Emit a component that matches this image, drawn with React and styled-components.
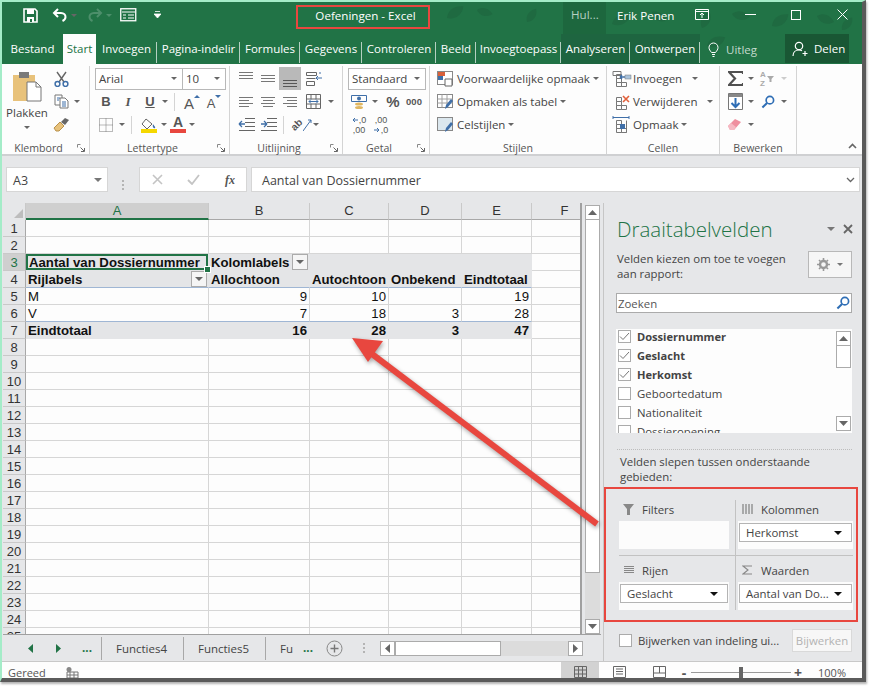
import React from 'react';
import styled, { createGlobalStyle, css } from 'styled-components';

const GlobalStyle = createGlobalStyle`
  html, body { margin: 0; padding: 0; background: #fff; }
  body { font-family: "Open Sans", "Noto Sans", sans-serif; overflow: hidden; }
`;

const green = '#217346';
const panelGrey = '#e6e7e9';
const arial = '"Liberation Sans", Arial, sans-serif';

const Page = styled.div`
  position: relative;
  width: 871px;
  height: 689px;
  background: #fff;
`;

const Frame = styled.div`
  box-sizing: border-box;
  width: 866px;
  height: 682px;
  border-top: 2px solid #a4ecc8;
  border-left: 2px solid #a4ecc8;
  border-right: 4px solid #5a5a5a;
  border-bottom: 4px solid #5a5a5a;
  box-shadow: 1px 2px 2px rgba(0, 0, 0, 0.3);
  display: flex;
  flex-direction: column;
  background: ${panelGrey};
  overflow: hidden;
`;

/* ---- title bar ---- */
const TitleBar = styled.div`
  position: relative;
  height: 32px;
  flex: none;
  background: ${green};
  display: flex;
  align-items: center;
  color: #fff;
  font-size: 11.6px;
  overflow: hidden;
`;

const Leaves = styled.svg`
  position: absolute;
  top: 0;
  left: ${p => p.$left}px;
  pointer-events: none;
`;

const Quick = styled.div`
  display: flex;
  align-items: center;
  flex: none;
  width: 294px;
  padding-left: 18px;
  margin-bottom: 6px;
  box-sizing: border-box;
  position: relative;
`;

const Slot = styled.span`
  display: inline-flex;
  align-items: center;
  justify-content: center;
  width: ${p => p.$w || 20}px;
  margin-left: ${p => p.$ml || 0}px;
  margin-top: ${p => p.$mt || 0}px;
  flex: none;
`;

const AppTitle = styled.div`
  position: relative;
  box-sizing: border-box;
  flex: none;
  width: 134px;
  height: 24px;
  margin-bottom: 3px;
  padding-left: 5px;
  border: 2px solid #e8473f;
  text-align: center;
  line-height: 17px;
  font-size: 11.6px;
`;

const HelpTab = styled.div`
  position: relative;
  flex: none;
  margin-left: 133px;
  width: 43px;
  height: 32px;
  padding-left: 8px;
  box-sizing: border-box;
  line-height: 26px;
  color: #b7d0c2;
  background: rgba(0, 0, 0, 0.1);
`;

const UserName = styled.div`
  position: relative;
  flex: none;
  margin: 0 0 6px 11px;
  width: 70px;
  white-space: nowrap;
`;

const WindowButtons = styled.div`
  position: relative;
  flex: none;
  display: flex;
  align-items: center;
  margin-bottom: 7px;
`;

/* ---- tabs ---- */
const TabBar = styled.div`
  position: relative;
  height: 30px;
  flex: none;
  background: ${green};
  display: flex;
  align-items: flex-end;
  color: #fff;
`;

const Tab = styled.div`
  position: relative;
  box-sizing: border-box;
  width: ${p => p.$w}px;
  flex: none;
  height: 30px;
  line-height: 30px;
  font-size: 11.5px;
  text-align: center;
  white-space: nowrap;
  ${p => p.$sep && css`
    &::after {
      content: '';
      position: absolute;
      right: 0;
      top: 8px;
      height: 21px;
      width: 1px;
      background: #b5d0c1;
    }
  `}
  ${p => p.$active && css`
    background: #fdfdfd;
    color: ${green};
  `}
  ${p => p.$context && css`
    background: #1e6540;
  `}
`;

const TellMe = styled.div`
  position: relative;
  display: flex;
  align-items: center;
  gap: 7px;
  margin-left: 6px;
  width: 79px;
  height: 30px;
  color: #c5dace;
  font-size: 11.5px;
`;

const ShareButton = styled.div`
  position: relative;
  align-self: flex-start;
  display: flex;
  align-items: center;
  gap: 5px;
  width: 64px;
  height: 29px;
  box-sizing: border-box;
  padding-left: 7px;
  background: #195734;
  font-size: 11.5px;
`;

/* ---- ribbon ---- */
const Ribbon = styled.div`
  flex: none;
  height: 90px;
  display: flex;
  background: #fdfdfd;
  border-bottom: 2px solid #cfd0d2;
  color: #444;
`;

const Group = styled.div`
  box-sizing: border-box;
  width: ${p => p.$w}px;
  flex: none;
  height: 88px;
  margin-top: 2px;
  border-right: 1px solid #d4d4d4;
  display: flex;
  flex-direction: column;
`;

const GroupBody = styled.div`
  flex: 1;
  display: flex;
  min-height: 0;
  padding: 1px 0 0 ${p => p.$pl || 0}px;
`;

const Stack = styled.div`
  display: flex;
  flex-direction: column;
  width: ${p => (p.$w ? `${p.$w}px` : 'auto')};
  margin-left: ${p => p.$ml || 0}px;
  padding-top: ${p => p.$pt || 0}px;
`;

const GroupLabel = styled.div`
  position: relative;
  box-sizing: border-box;
  height: 13px;
  line-height: 15px;
  font-size: 10.6px;
  color: #555;
  text-align: center;
  padding-right: ${p => (p.$launcher ? 14 : 0)}px;
`;

const Launcher = styled.svg`
  position: absolute;
  right: 4px;
  top: 3px;
`;

const CollapseSlot = styled.span`
  margin: 0 5px 5px auto;
  align-self: flex-end;
  line-height: 0;
`;

const Row = styled.div`
  display: flex;
  align-items: center;
  height: 23px;
`;

const Divider = styled.span`
  width: 1px;
  height: 18px;
  background: #d4d4d4;
  margin: 0 ${p => p.$m || 5}px;
  flex: none;
`;

const Caret = styled.span`
  display: inline-block;
  flex: none;
  width: 0;
  height: 0;
  border-left: ${p => p.$s || 3}px solid transparent;
  border-right: ${p => p.$s || 3}px solid transparent;
  border-top: ${p => p.$s || 3}px solid ${p => p.$c || '#666'};
  margin-left: ${p => p.$ml || 0}px;
`;

const Combo = styled.div`
  box-sizing: border-box;
  width: ${p => p.$w}px;
  height: 22px;
  border: 1px solid #b8b8b8;
  border-left: ${p => (p.$joined ? 'none' : '1px solid #b8b8b8')};
  background: #fff;
  display: flex;
  align-items: center;
  justify-content: space-between;
  padding: 0 5px 0 3px;
  font-size: 11.5px;
  color: #444;
  flex: none;
`;

const PasteLabel = styled.div`
  font-size: 11.5px;
  margin-top: 3px;
  text-align: center;
  line-height: 14px;
  color: #444;
`;

const ActiveAlign = styled.span`
  display: inline-flex;
  align-items: center;
  justify-content: center;
  width: 22px;
  height: 23px;
  background: #b9b9b9;
  flex: none;
`;

const BoldLetter = styled.span`
  font-family: ${p => (p.$serif ? '"Liberation Serif", serif' : arial)};
  font-weight: 700;
  font-style: ${p => (p.$italic ? 'italic' : 'normal')};
  text-decoration: ${p => (p.$under ? 'underline' : 'none')};
  font-size: 13px;
  color: #555;
  width: 22px;
  text-align: center;
  flex: none;
`;

const GrowSlot = styled.span`
  display: inline-flex;
  align-items: flex-start;
  width: 22px;
  height: 20px;
  flex: none;
  justify-content: center;
  gap: 0;
  font-family: ${arial};
  font-size: ${p => (p.$small ? 13 : 15)}px;
  line-height: ${p => (p.$small ? 24 : 23)}px;
  color: #555;
`;

const TinyTriangle = styled.svg`
  margin-top: 3px;
  flex: none;
`;

const ColorLetter = styled.span`
  display: inline-flex;
  flex-direction: column;
  align-items: center;
  width: 16px;
  font: 700 14px/13px ${arial};
  color: #555;
  flex: none;
  margin-left: 3px;
  &::after {
    content: '';
    width: 16px;
    height: 4px;
    background: #e8473f;
  }
`;

const OrientLetters = styled.span`
  display: inline-block;
  transform: rotate(-45deg);
  font: 700 10px/10px ${arial};
  color: #555;
`;

const OrientSlot = styled.span`
  display: inline-flex;
  align-items: center;
  width: 22px;
  flex: none;
  margin-left: 3px;
`;

const DecimalStack = styled.span`
  display: inline-flex;
  flex-direction: column;
  width: 22px;
  flex: none;
  font: 9px/10px ${arial};
  color: #555;
  align-items: center;
`;

const DecimalLine = styled.span`
  display: flex;
  align-items: center;
  gap: 1px;
  height: 10px;
  white-space: nowrap;
`;

const GlyphSlot = styled.span`
  display: inline-flex;
  justify-content: center;
  flex: none;
  width: ${p => p.$w}px;
  margin-left: ${p => p.$ml || 0}px;
  font-family: ${arial};
  font-weight: 700;
  font-size: ${p => p.$s}px;
  color: #555;
`;

const SortSlot = styled.span`
  display: inline-flex;
  align-items: center;
  gap: 1px;
  width: 16px;
  flex: none;
  margin-left: 6px;
`;

const SortLetters = styled.span`
  display: inline-flex;
  flex-direction: column;
  font: 700 8px/9px ${arial};
  color: #aaa;
`;

const StyleItem = styled.div`
  display: flex;
  align-items: center;
  height: 23px;
  gap: ${p => p.$gap || 3}px;
  font-size: 11.5px;
  color: #444;
  white-space: nowrap;
`;

/* ---- formula bar ---- */
const FormulaBar = styled.div`
  flex: none;
  height: 47px;
  box-sizing: border-box;
  padding: 11px 2px 0 4px;
  display: flex;
  background: ${panelGrey};
`;

const NameBox = styled.div`
  box-sizing: border-box;
  width: 102px;
  height: 25px;
  background: #fff;
  border: 1px solid #d6d6d6;
  display: flex;
  align-items: center;
  justify-content: space-between;
  padding: 1px 5px 0 6px;
  font-size: 12.5px;
  color: #444;
`;

const Grip = styled.span`
  width: 2px;
  height: 2px;
  background: #b4b4b4;
  box-shadow: 0 4px 0 #b4b4b4, 0 8px 0 #b4b4b4;
  margin: 0 ${p => p.$mr || 0}px 8px ${p => p.$ml || 0}px;
  align-self: center;
  flex: none;
`;

const FormulaButtons = styled.div`
  box-sizing: border-box;
  width: 108px;
  height: 25px;
  background: #fff;
  border: 1px solid #d6d6d6;
  display: flex;
  align-items: center;
  padding-left: 6px;
`;

const FxGlyph = styled.span`
  width: 24px;
  flex: none;
  text-align: center;
  font: italic 700 12px/14px "Liberation Serif", serif;
  color: #555;
`;

const FormulaInput = styled.div`
  box-sizing: border-box;
  flex: 1;
  margin-left: 4px;
  height: 25px;
  background: #fff;
  border: 1px solid #d6d6d6;
  display: flex;
  align-items: center;
  justify-content: space-between;
  padding: 1px 4px 0 10px;
  font-size: 12.5px;
  color: #444;
`;

/* ---- work area ---- */
const Work = styled.div`
  flex: 1;
  min-height: 0;
  display: flex;
`;

const SheetColumn = styled.div`
  width: 599px;
  flex: none;
  display: flex;
  flex-direction: column;
  padding-left: 1px;
  box-sizing: border-box;
`;

const SheetArea = styled.div`
  height: 431px;
  flex: none;
  display: flex;
  border-bottom: 1px solid #a0a0a0;
`;

const Grid = styled.div`
  box-sizing: border-box;
  width: 579px;
  flex: none;
  overflow: hidden;
  display: grid;
  grid-template-columns: 23px 183px 101px 79px 73px 70px 66px;
  grid-auto-rows: 17px;
  background: linear-gradient(${panelGrey} 17px, #fdfdfd 17px);
  border-right: 2px solid #a0a0a0;
  align-content: start;
`;

const Corner = styled.div`
  background: ${panelGrey};
  position: relative;
  border-right: 1px solid #c9c9c9;
  &::after {
    content: '';
    position: absolute;
    right: 2px;
    bottom: 2px;
    border-left: 9px solid transparent;
    border-bottom: 9px solid #bdbdbd;
  }
`;

const ColHead = styled.div`
  box-sizing: border-box;
  background: ${p => (p.$active ? '#cfcfcf' : panelGrey)};
  color: ${p => (p.$active ? green : '#333')};
  border-right: 1px solid #c9c9c9;
  border-bottom: ${p => (p.$active ? `2px solid ${green}` : '1px solid #a8a8a8')};
  font: 13px/15px ${arial};
  text-align: center;
`;

const RowHead = styled.div`
  box-sizing: border-box;
  background: ${p => (p.$active ? '#cfcfcf' : panelGrey)};
  color: ${p => (p.$active ? green : '#333')};
  border-right: 1px solid #a8a8a8;
  border-bottom: 1px solid #c9c9c9;
  font: 13px/17px ${arial};
  text-align: center;
`;

const Cell = styled.div`
  position: relative;
  box-sizing: border-box;
  border-right: 1px solid ${p => (p.$fill ? 'transparent' : '#d6d6d6')};
  border-bottom: 1px solid ${p => (p.$line ? '#9fb6d4' : p.$fill ? 'transparent' : '#d6d6d6')};
  background: ${p => (p.$fill ? '#e4e5e7' : 'transparent')};
  font: ${p => (p.$bold ? 700 : 400)} 13.2px/17px ${arial};
  color: #111;
  padding: 0 2px;
  text-align: ${p => (p.$num ? 'right' : 'left')};
  white-space: nowrap;
  ${p => p.$selected && css`
    box-shadow: inset 0 0 0 2px ${green};
    padding-left: 3px;
    &::after {
      content: '';
      position: absolute;
      right: -3px;
      bottom: -3px;
      width: 5px;
      height: 5px;
      background: ${green};
      border: 1px solid #fff;
      z-index: 2;
    }
  `}
`;

const FilterButton = styled.span`
  position: absolute;
  right: 1px;
  top: 0;
  box-sizing: border-box;
  width: 16px;
  height: 16px;
  background: #f5f5f5;
  border: 1px solid #ababab;
  display: flex;
  align-items: center;
  justify-content: center;
`;

const VScroll = styled.div`
  box-sizing: border-box;
  width: 19px;
  flex: none;
  padding: 2px 1px 0 3px;
  display: flex;
  flex-direction: column;
`;

const ScrollThumb = styled.div`
  box-sizing: border-box;
  flex: none;
  background: #fff;
  border: 1px solid #ababab;
  border-top: none;
  width: 15px;
  height: ${p => p.$h}px;
`;

const VTrack = styled.div`
  flex: 1;
  background: ${p => (p.$dark ? '#dcdcdc' : 'transparent')};
`;

const ArrowBtn = styled.div`
  box-sizing: border-box;
  width: 15px;
  height: ${p => p.$h || 15}px;
  flex: none;
  background: #fff;
  border: 1px solid #ababab;
  display: flex;
  align-items: center;
  justify-content: center;
`;

const SheetTabs = styled.div`
  flex: none;
  height: 26px;
  display: flex;
  align-items: center;
  background: ${panelGrey};
  font-size: 11.5px;
  color: #444;
`;

const NavDots = styled.span`
  color: ${green};
  font-weight: 700;
  width: 16px;
  margin-left: ${p => p.$ml || 0}px;
  text-align: center;
  line-height: 10px;
  flex: none;
`;

const SheetTab = styled.div`
  box-sizing: border-box;
  height: 23px;
  width: ${p => p.$w}px;
  flex: none;
  line-height: 23px;
  padding: 0 ${p => (p.$pl ? 0 : 2)}px 0 ${p => p.$pl || 0}px;
  text-align: ${p => (p.$pl ? 'left' : 'center')};
  border-right: ${p => (p.$noSep ? 'none' : '1px solid #a8a8a8')};
`;

const TabSep = styled.span`
  width: 1px;
  height: 23px;
  background: #a8a8a8;
  flex: none;
  margin-left: ${p => p.$ml}px;
`;

const HScroll = styled.div`
  display: flex;
  align-items: center;
  margin-left: 15px;
  width: 203px;
  flex: none;
`;

const HThumb = styled.div`
  box-sizing: border-box;
  width: 106px;
  height: 15px;
  background: #fff;
  border: 1px solid #ababab;
  flex: none;
`;

const HTrack = styled.div`
  flex: 1;
  height: 15px;
  background: #dcdcdc;
`;

/* ---- field pane ---- */
const Pane = styled.div`
  flex: 1;
  min-width: 0;
  box-sizing: border-box;
  margin-left: 2px;
  padding: 14px 10px 0 13px;
  border-left: 1px solid #c6c6c6;
  background: ${panelGrey};
  color: #444;
  font-size: 11.4px;
  line-height: 15px;
  display: flex;
  flex-direction: column;
`;

const PaneHead = styled.div`
  display: flex;
  align-items: center;
  justify-content: space-between;
  height: 24px;
  margin-right: -1px;
`;

const PaneTitle = styled.div`
  font-size: 20.5px;
  font-weight: 300;
  color: ${green};
  line-height: 24px;
`;

const PaneTools = styled.div`
  display: flex;
  align-items: center;
  gap: 8px;
`;

const PaneIntro = styled.div`
  display: flex;
  justify-content: space-between;
  margin-top: 10px;
  height: 32px;
`;

const GearButton = styled.div`
  box-sizing: border-box;
  width: 44px;
  height: 27px;
  background: #f6f6f6;
  border: 1px solid #b8b8b8;
  display: flex;
  align-items: center;
  justify-content: center;
  gap: 7px;
`;

const SearchBox = styled.div`
  box-sizing: border-box;
  height: 20px;
  margin: 10px 0 0 -1px;
  background: #fff;
  border: 1px solid #ababab;
  display: flex;
  align-items: center;
  justify-content: space-between;
  padding: 0 1px;
  color: #555;
`;

const FieldList = styled.div`
  margin: 16px 0 0 -1px;
  height: 104px;
  flex: none;
  background: #fdfdfd;
  overflow: hidden;
  display: flex;
`;

const Fields = styled.div`
  flex: 1;
  margin-top: -2px;
  padding-left: 2px;
`;

const FieldRow = styled.div`
  display: flex;
  align-items: center;
  height: 19px;
  gap: 6px;
  font-weight: ${p => (p.$on ? 700 : 400)};
  font-size: ${p => (p.$on ? 11.1 : 11.4)}px;
  color: #444;
  white-space: nowrap;
`;

const CheckBox = styled.span`
  box-sizing: border-box;
  width: 13px;
  height: 13px;
  background: #fff;
  border: 1px solid #ababab;
  flex: none;
  display: inline-flex;
  align-items: center;
  justify-content: center;
`;

const ListScroll = styled.div`
  width: 15px;
  flex: none;
  margin-right: 1px;
  display: flex;
  flex-direction: column;
  padding-top: 2px;
  height: 102px;
  box-sizing: border-box;
`;

const DottedRule = styled.div`
  border-top: 1px dotted #bcbcbc;
  margin-top: 16px;
`;

const DragHint = styled.div`
  margin-top: 4px;
  padding-left: 3px;
  height: 30px;
  flex: none;
`;

const AreaBox = styled.div`
  box-sizing: border-box;
  flex: none;
  margin: 3px -6px 0 -13px;
  height: 135px;
  border: 2px solid #e8473f;
  padding: 11px 0 0 13px;
  display: grid;
  grid-template-columns: 117px 117px;
  grid-template-rows: 56px 54px;
`;

const Area = styled.div`
  box-sizing: border-box;
  display: flex;
  flex-direction: column;
  border-right: ${p => (p.$right ? 'none' : '1px solid #c2c2c2')};
  border-bottom: ${p => (p.$bottom ? 'none' : '1px solid #c2c2c2')};
  padding-right: ${p => (p.$right ? 0 : 6)}px;
  padding-left: ${p => (p.$right ? 2 : 0)}px;
  padding-top: ${p => (p.$bottom ? 5 : 0)}px;
`;

const AreaHead = styled.div`
  box-sizing: border-box;
  display: flex;
  align-items: center;
  gap: 7px;
  height: 21px;
  flex: none;
  padding: 0 0 3px 4px;
`;

const DropZone = styled.div`
  box-sizing: border-box;
  height: 28px;
  flex: none;
  background: #fcfcfc;
  padding: 2px 1px 0;
`;

const FieldPill = styled.div`
  box-sizing: border-box;
  height: 19px;
  background: #fff;
  border: 1px solid #b4b4b4;
  display: flex;
  align-items: center;
  justify-content: space-between;
  padding: 0 9px 0 6px;
  white-space: nowrap;
  overflow: hidden;
`;

const UpdateRow = styled.div`
  display: flex;
  align-items: center;
  justify-content: space-between;
  height: 23px;
  margin-top: 7px;
  padding-left: 2px;
`;

const UpdateLabel = styled.div`
  display: flex;
  align-items: center;
  gap: 6px;
  white-space: nowrap;
`;

const UpdateButton = styled.div`
  box-sizing: border-box;
  width: 60px;
  height: 23px;
  background: #f7f7f7;
  border: 1px solid #d9d9d9;
  color: #b3b3b3;
  text-align: center;
  line-height: 21px;
`;

/* ---- status bar ---- */
const StatusBar = styled.div`
  flex: none;
  height: 17px;
  box-sizing: border-box;
  display: flex;
  align-items: stretch;
  background: #fdfdfd;
  border-top: 1px solid #c8c8c8;
  font-size: 11px;
  color: #555;
  line-height: 11px;
  overflow: hidden;
`;

const StatusLeft = styled.div`
  display: flex;
  align-items: center;
  padding-top: 5px;
`;

const StatusText = styled.span`
  margin-left: 6px;
  width: 58px;
`;

const ViewGroup = styled.div`
  margin-left: auto;
  display: flex;
  align-items: center;
  padding: 4px 16px 0 0;
`;

const NormalView = styled.span`
  display: inline-flex;
  align-items: center;
  justify-content: center;
  box-sizing: border-box;
  width: 38px;
  align-self: stretch;
  margin-top: -4px;
  padding-top: 4px;
  background: #d2d2d2;
`;

const ZoomTrack = styled.span`
  position: relative;
  display: inline-block;
  width: 100px;
  height: 1px;
  background: #9a9a9a;
  margin: 0 2px;
  &::after {
    content: '';
    position: absolute;
    left: 48px;
    top: -5px;
    width: 4px;
    height: 11px;
    background: #666;
  }
`;

const ZoomSign = styled.span`
  font-weight: 700;
  font-size: 14px;
  line-height: 11px;
  color: #555;
  width: 10px;
  text-align: center;
`;

const ZoomValue = styled.span`
  margin-left: 15px;
`;

const Annotation = styled.svg`
  position: absolute;
  left: 0;
  top: 0;
  pointer-events: none;
  filter: drop-shadow(1px 2px 2px rgba(0, 0, 0, 0.35));
`;

/* ---- drawings ---- */
const Svg = ({ w = 16, h = 16, children, ...rest }) => (
  <svg width={w} height={h} viewBox={`0 0 ${w} ${h}`} fill="none" {...rest}>{children}</svg>
);

const Lines = ({ ys, xs, color = '#777', w = 16, h = 14 }) => (
  <Svg w={w} h={h}>
    {ys.map((y, i) => (
      <rect key={y} x={xs[i][0]} y={y} width={xs[i][1]} height="1" fill={color} />
    ))}
  </Svg>
);

const SaveIcon = () => (
  <Svg w={15} h={15}>
    <path d="M1 1h11l2 2v11H1z" stroke="#fff" strokeWidth="1.6" />
    <rect x="4" y="1" width="7" height="5" fill="#fff" />
    <rect x="4" y="9" width="7" height="5" fill="#fff" />
    <rect x="7" y="11" width="2" height="3" fill={green} />
  </Svg>
);

const UndoIcon = ({ color = '#fff', flip }) => (
  <Svg w={16} h={14} style={flip ? { transform: 'scaleX(-1)' } : undefined}>
    <path d="M6 1L2 5l4 4M2 5h7c3 0 4.5 2 4.5 4s-1 3-3 4" stroke={color} strokeWidth="2" />
  </Svg>
);

const FormIcon = () => (
  <Svg w={17} h={14}>
    <rect x=".75" y=".75" width="15" height="12" stroke="#fff" strokeWidth="1.3" />
    <path d="M2 4h13M8 7h6M8 10h6M3 7h3M3 10h3" stroke="#fff" />
  </Svg>
);

const ClipboardIcon = () => (
  <Svg w={30} h={32}>
    <path d="M1 4h22v26H1z" fill="#e8c27b" />
    <rect x="7" y="1" width="10" height="6" fill="#7a7a7a" />
    <path d="M15 11h9l5 5v14H15z" fill="#fff" stroke="#777" />
    <path d="M24 11v5h5" stroke="#777" />
  </Svg>
);

const CutIcon = () => (
  <Svg w={15} h={16}>
    <path d="M3 1l7 10M12 1L5 11" stroke="#666" strokeWidth="1.4" />
    <circle cx="3.5" cy="13" r="2.4" stroke="#3f6fa8" strokeWidth="1.5" />
    <circle cx="11.5" cy="13" r="2.4" stroke="#3f6fa8" strokeWidth="1.5" />
  </Svg>
);

const CopyIcon = () => (
  <Svg w={15} h={15}>
    <path d="M1 1h7v10H1z" fill="#fff" stroke="#777" />
    <path d="M6 4h5l3 3v7H6z" fill="#fff" stroke="#777" />
    <path d="M3 4h3M3 6h2M8 8h4M8 10h4M8 12h4" stroke="#3f6fa8" />
  </Svg>
);

const PainterIcon = () => (
  <Svg w={17} h={15}>
    <path d="M1 11l6-6 4 4-5 5H3z" fill="#e8c27b" stroke="#b8914c" />
    <path d="M8 5l4-4 4 2-4 5z" fill="#666" />
  </Svg>
);

const GrowFont = ({ down }) => (
  <GrowSlot $small={down}>
    A
    <TinyTriangle width="6" height="4">
      <path d={down ? 'M0 0h6L3 3z' : 'M3 0l3 3H0z'} fill="#3f6fa8" />
    </TinyTriangle>
  </GrowSlot>
);

const BorderIcon = () => (
  <Svg w={14} h={14}>
    <path d="M.5.5h13v13H.5zM7 .5v13M.5 7h13" stroke="#777" strokeDasharray="1 1" />
  </Svg>
);

const FillIcon = () => (
  <Svg w={17} h={16}>
    <path d="M5 2l6 5-5 5-5-5z" fill="#fff" stroke="#666" />
    <path d="M12 7c1 2 3 3 2 4s-3-1-2-4z" fill="#3f6fa8" />
    <rect x="0" y="12" width="16" height="4" fill="#f5d800" />
  </Svg>
);

const WrapIcon = () => (
  <Svg w={18} h={16}>
    <path d="M1.5 1.5h10v3h-10zM1.5 7.5h9M1.5 10.5h8v4h-8z" stroke="#666" />
    <path d="M14 2h2M17 7h-6l2-2m-2 2l2 2" stroke="#3f6fa8" />
  </Svg>
);

const MergeIcon = () => (
  <Svg w={16} h={16}>
    <path d="M.5.5h14v14H.5zM.5 5h14M.5 10h14M5 .5V5M10 .5V5M5 10v5M10 10v5" stroke="#666" />
    <path d="M3 7.5h9M3 7.5l2-2M3 7.5l2 2M12 7.5l-2-2M12 7.5l-2 2" stroke="#3f6fa8" />
  </Svg>
);

const IndentIcon = ({ out }) => (
  <Svg w={17} h={13}>
    <path d="M7 .5h10M7 4.5h10M7 8.5h10M1 12.5h16" stroke="#666" />
    {out
      ? <path d="M1 6h6M1 6l3-3M1 6l3 3" stroke="#3f6fa8" strokeWidth="1.3" />
      : <path d="M1 6h6M7 6L4 3M7 6L4 9" stroke="#3f6fa8" strokeWidth="1.3" />}
  </Svg>
);

const OrientIcon = () => (
  <OrientSlot>
    <OrientLetters>ab</OrientLetters>
    <Svg w={9} h={14}>
      <path d="M0 13L8 2M8 2H5M8 2v3" stroke="#3f6fa8" />
    </Svg>
  </OrientSlot>
);

const CurrencyIcon = () => (
  <Svg w={17} h={16}>
    <path d="M.5 1.5h15v6H.5z" stroke="#3f6fa8" />
    <circle cx="8" cy="4.5" r="2" fill="#3f6fa8" />
    <ellipse cx="8" cy="10" rx="4" ry="1.6" fill="#e0b660" />
    <ellipse cx="8" cy="13.5" rx="4" ry="1.6" fill="#e0b660" />
  </Svg>
);

const DecArrow = ({ left }) => (
  <Svg w={6} h={6}>
    <path d={left ? 'M6 3H1M1 3l2-2M1 3l2 2' : 'M0 3h5M5 3L3 1M5 3L3 5'} stroke="#3f6fa8" />
  </Svg>
);

const StyleIcon = ({ kind }) => (
  <Svg w={17} h={16}>
    <rect x=".5" y=".5" width="15" height="13" fill={kind === 'cell' ? '#dbe7ee' : '#fff'} stroke="#888" />
    {kind === 'cond' && <rect x="1" y="1" width="7" height="4" fill="#d8603a" />}
    {kind === 'cond' && <rect x="1" y="5" width="5" height="4" fill="#3f6fa8" />}
    {kind === 'cond' && <path d="M8 8h7v7H8z" fill="#fff" stroke="#666" />}
    {kind === 'table' && <path d="M.5 5h15M.5 9h15M5 .5v13M10 .5v13" stroke="#a0a0a0" />}
    {kind !== 'cond' && <path d="M8 15l1-4 5-6 2 2-5 6z" fill="#3f6fa8" />}
  </Svg>
);

const CellsIcon = ({ kind }) => (
  <Svg w={20} h={18}>
    <path d="M4.5 4.5h5v4h-5zM4.5 8.500h5v4h-5zM4.5 12.500h5v4h-5zM9.500 12.500h5v4h-5z" stroke="#777" />
    {kind === 'ins' && <path d="M1 1.500h8v4H1z" stroke="#777" />}
    {kind === 'ins' && <path d="M8 7h5M8 7l2-2M8 7l2 2" stroke="#3f6fa8" strokeWidth="1.400" />}
    {kind === 'ins' && <rect x="13" y="5" width="6" height="4" fill="#a9c3dc" stroke="#777" strokeWidth=".5" />}
    {kind === 'del' && <path d="M11 3l6 6M17 3l-6 6" stroke="#e2603a" strokeWidth="1.600" />}
    {kind === 'fmt' && <rect x="8" y="8" width="5" height="5" fill="#3f6fa8" />}
    {kind === 'fmt' && <path d="M1 1.500h16M1 0v3M17 0v3" stroke="#3f6fa8" />}
    {kind === 'fmt' && <path d="M14.500 4.500v12" stroke="#777" />}
  </Svg>
);

const SumIcon = () => (
  <Svg w={15} h={15}>
    <path d="M15 3V1H1l6 6.500L1 14h14v-2" stroke="#505050" strokeWidth="2.200" />
  </Svg>
);

const FillDown = () => (
  <Svg w={15} h={17}>
    <path d="M.5.5h14v16H.5z" fill="#fff" stroke="#777" />
    <rect x="1" y="1" width="13" height="3" fill="#888" />
    <path d="M7.500 5v9M3.500 10l4 4 4-4" stroke="#2f6eb5" strokeWidth="2" />
  </Svg>
);

const SearchIcon = ({ s = 15 }) => (
  <svg width={s} height={s} viewBox="0 0 15 15" fill="none">
    <circle cx="9.500" cy="5.500" r="4" stroke="#2f6eb5" strokeWidth="1.800" />
    <path d="M6.500 8.500L1.500 13.500" stroke="#2f6eb5" strokeWidth="2.200" />
  </svg>
);

const Eraser = () => (
  <Svg w={14} h={13}>
    <path d="M0 8l7-7 6 3-7 8H2z" fill="#ef8f9f" />
    <path d="M0 8l3-3 5 4-2 3H2z" fill="#f6b9c3" />
  </Svg>
);

const Tick = ({ color = '#777' }) => (
  <Svg w={11} h={9}>
    <path d="M1 4.500l3 3 6-6.500" stroke={color} />
  </Svg>
);

const TriUp = () => <svg width="9" height="5"><path d="M0 5l4.500-5 4.500 5z" fill="#666" /></svg>;
const TriDown = () => <svg width="9" height="5"><path d="M0 0l4.500 5 4.500-5z" fill="#666" /></svg>;
const TriLeft = ({ c = '#666' }) => <svg width="5" height="9"><path d="M5 0L0 4.500 5 9z" fill={c} /></svg>;
const TriRight = ({ c = '#666' }) => <svg width="5" height="9"><path d="M0 0l5 4.500L0 9z" fill={c} /></svg>;

const LauncherIcon = () => (
  <Launcher width="8" height="8">
    <path d="M.5.500h3M.5.500v3" stroke="#888" />
    <path d="M7.500 7.500H4M7.500 7.500V4M7 7L3.500 3.500" stroke="#666" />
  </Launcher>
);

const Leaf = ({ x, y, r = 0, s = 1 }) => (
  <path
    transform={`translate(${x} ${y}) rotate(${r}) scale(${s})`}
    d="M0 0c5-7 13-7 20-2-5 7-14 8-20 2z"
  />
);

/* ---- data ---- */
const tabs = [
  ['Bestand', 61, false], ['Start', 33, false, 'active'], ['Invoegen', 61, true],
  ['Pagina-indelir', 83, true], ['Formules', 60, true], ['Gegevens', 62, true],
  ['Controleren', 74, true], ['Beeld', 40, true], ['Invoegtoepass', 85, true],
  ['Analyseren', 69, true, 'context'], ['Ontwerpen', 70, true, 'context'],
];

const B = { bold: true };
const rows = {
  3: [{ t: 'Aantal van Dossiernummer', selected: true, fill: true, ...B }, { t: 'Kolomlabels', filter: true, fill: true, ...B }, { fill: true }, { fill: true }, { fill: true }],
  4: [{ t: 'Rijlabels', filter: true, fill: true, line: true, ...B }, { t: 'Allochtoon', fill: true, line: true, ...B }, { t: 'Autochtoon', fill: true, line: true, ...B }, { t: 'Onbekend', fill: true, line: true, ...B }, { t: 'Eindtotaal', fill: true, line: true, ...B }],
  5: [{ t: 'M' }, { t: '9', num: true }, { t: '10', num: true }, {}, { t: '19', num: true }],
  6: [{ t: 'V', line: true }, { t: '7', num: true, line: true }, { t: '18', num: true, line: true }, { t: '3', num: true, line: true }, { t: '28', num: true, line: true }],
  7: [{ t: 'Eindtotaal', fill: true, ...B }, { t: '16', num: true, fill: true, ...B }, { t: '28', num: true, fill: true, ...B }, { t: '3', num: true, fill: true, ...B }, { t: '47', num: true, fill: true, ...B }],
};

const rowNumbers = Array.from({ length: 25 }, (_, i) => i + 1);
const fieldList = [
  ['Dossiernummer', true], ['Geslacht', true], ['Herkomst', true],
  ['Geboortedatum', false], ['Nationaliteit', false], ['Dossieropening', false],
];

const Pill = ({ label }) => (
  <FieldPill>{label}<Caret $s={4} $c="#111" /></FieldPill>
);

function Sheet() {
  return (
    <Grid>
      <Corner />
      {['A', 'B', 'C', 'D', 'E', 'F'].map(c => <ColHead key={c} $active={c === 'A'}>{c}</ColHead>)}
      {rowNumbers.map(n => (
        <React.Fragment key={n}>
          <RowHead $active={n === 3}>{n}</RowHead>
          {[0, 1, 2, 3, 4, 5].map((c) => {
            const cell = (rows[n] && rows[n][c]) || {};
            return (
              <Cell
                key={c}
                $fill={cell.fill}
                $bold={cell.bold}
                $num={cell.num}
                $line={cell.line}
                $selected={cell.selected}
              >
                {cell.t}
                {cell.filter && <FilterButton><Caret $s={4} /></FilterButton>}
              </Cell>
            );
          })}
        </React.Fragment>
      ))}
    </Grid>
  );
}

export default function App() {
  return (
    <Page>
      <GlobalStyle />
      <Frame>
        <TitleBar>
          <Leaves $left={445} width="420" height="32" viewBox="0 0 420 32" fill="#1f6a41">
            <Leaf x={0} y={16} r={-30} />
            <Leaf x={30} y={8} r={20} s={0.8} />
            <Leaf x={80} y={20} r={-50} s={0.8} />
            <Leaf x={165} y={22} r={-20} />
            <Leaf x={205} y={10} r={40} s={0.8} />
            <Leaf x={255} y={26} r={-60} s={0.9} />
            <Leaf x={285} y={12} r={15} s={0.9} />
            <Leaf x={325} y={24} r={-30} />
            <Leaf x={370} y={14} r={25} s={0.9} />
            <Leaf x={395} y={28} r={-45} s={0.8} />
          </Leaves>
          <Quick>
            <Slot $w={20}><SaveIcon /></Slot>
            <Slot $w={20} $ml={10}><UndoIcon /></Slot>
            <Slot $w={8}><Caret /></Slot>
            <Slot $w={20} $ml={7}><UndoIcon color="#4d8f6b" flip /></Slot>
            <Slot $w={8}><Caret $c="#4d8f6b" /></Slot>
            <Slot $w={20} $ml={5}><FormIcon /></Slot>
            <Slot $w={16} $ml={11}>
              <Svg w={7} h={8}><path d="M1 .500h5M0 3h7L3.500 7z" stroke="#fff" strokeWidth=".8" fill="#fff" /></Svg>
            </Slot>
          </Quick>
          <AppTitle>Oefeningen - Excel</AppTitle>
          <HelpTab>Hul...</HelpTab>
          <UserName>Erik Penen</UserName>
          <WindowButtons>
            <Slot $w={30}>
              <Svg w={14} h={11}><path d="M.5.500h13v10H.5zM.5 2.500h13M7 9V4M5 6l2-2 2 2" stroke="#fff" /></Svg>
            </Slot>
            <Slot $w={46} $ml={10}>
              <Svg w={11} h={2}><rect width="11" height="1" fill="#fff" /></Svg>
            </Slot>
            <Slot $w={46}>
              <Svg w={10} h={10}><rect x=".5" y=".5" width="9" height="9" stroke="#fff" /></Svg>
            </Slot>
            <Slot $w={46}>
              <Svg w={11} h={11}><path d="M.5.500l10 10M10.500.500l-10 10" stroke="#fff" /></Svg>
            </Slot>
          </WindowButtons>
        </TitleBar>

        <TabBar>
          <Leaves $left={700} width="160" height="30" viewBox="0 0 160 30" fill="#1f6a41">
            <Leaf x={5} y={12} r={-20} />
            <Leaf x={110} y={6} r={20} s={0.8} />
          </Leaves>
          {tabs.map(([label, w, sep, kind]) => (
            <Tab key={label} $w={w} $sep={sep} $active={kind === 'active'} $context={kind === 'context'}>{label}</Tab>
          ))}
          <TellMe>
            <Svg w={11} h={15} style={{ marginLeft: 2 }}>
              <path d="M3.500 10.500C2 8.500 1 7.500 1 5.500a4.500 4.500 0 019 0c0 2-1 3-2.500 5zM4 12.500h3M4.500 14.500h2" stroke="#fff" />
            </Svg>
            Uitleg
          </TellMe>
          <ShareButton>
            <Svg w={17} h={16}>
              <circle cx="7" cy="5" r="3.700" stroke="#fff" strokeWidth="1.200" />
              <path d="M1 15c0-4 3-6 6-6 1 0 2 .3 3 .8M13 10v5M10.500 12.500h5" stroke="#fff" strokeWidth="1.200" />
            </Svg>
            Delen
          </ShareButton>
        </TabBar>

        <Ribbon>
          <Group $w={88}>
            <GroupBody $pl={3}>
              <Stack $w={44} $pt={4}>
                <Slot $w={44}><ClipboardIcon /></Slot>
                <PasteLabel>Plakken</PasteLabel>
                <Slot $w={44} $mt={6}><Caret /></Slot>
              </Stack>
              <Stack $ml={2}>
                <Row><Slot $w={20}><CutIcon /></Slot></Row>
                <Row><Slot $w={20}><CopyIcon /></Slot><Caret $ml={3} /></Row>
                <Row><Slot $w={20}><PainterIcon /></Slot></Row>
              </Stack>
            </GroupBody>
            <GroupLabel $launcher>Klembord<LauncherIcon /></GroupLabel>
          </Group>

          <Group $w={140}>
            <GroupBody $pl={5}>
              <Stack>
                <Row>
                  <Combo $w={88}>Arial<Caret /></Combo>
                  <Combo $w={43} $joined>10<Caret /></Combo>
                </Row>
                <Row>
                  <BoldLetter>B</BoldLetter>
                  <BoldLetter $italic $serif>I</BoldLetter>
                  <BoldLetter $under>U</BoldLetter>
                  <Caret $ml={1} />
                  <Divider $m={6} />
                  <GrowFont />
                  <GrowFont down />
                </Row>
                <Row>
                  <Slot $w={22}><BorderIcon /></Slot>
                  <Caret $ml={2} />
                  <Divider $m={6} />
                  <Slot $w={22}><FillIcon /></Slot>
                  <Caret $ml={1} />
                  <ColorLetter>A</ColorLetter>
                  <Caret $ml={3} />
                </Row>
              </Stack>
            </GroupBody>
            <GroupLabel $launcher>Lettertype<LauncherIcon /></GroupLabel>
          </Group>

          <Group $w={113}>
            <GroupBody $pl={5}>
              <Stack>
                <Row>
                  <Slot $w={22}><Lines h={16} ys={[1, 4, 7]} xs={[[1, 14], [1, 14], [1, 14]]} /></Slot>
                  <Slot $w={22}><Lines h={16} ys={[4, 7, 10]} xs={[[1, 14], [1, 14], [1, 14]]} /></Slot>
                  <ActiveAlign><Lines h={16} ys={[9, 12, 15]} xs={[[1, 14], [1, 14], [1, 14]]} color="#555" /></ActiveAlign>
                  <Slot $w={24} $ml={1}><WrapIcon /></Slot>
                </Row>
                <Row>
                  <Slot $w={22}><Lines ys={[2, 5, 8, 11]} xs={[[1, 14], [1, 10], [1, 14], [1, 10]]} /></Slot>
                  <Slot $w={22}><Lines ys={[2, 5, 8, 11]} xs={[[1, 14], [3, 10], [1, 14], [3, 10]]} /></Slot>
                  <Slot $w={22}><Lines ys={[2, 5, 8, 11]} xs={[[1, 14], [5, 10], [1, 14], [5, 10]]} /></Slot>
                  <Slot $w={24} $ml={1}><MergeIcon /></Slot>
                  <Caret $ml={2} />
                </Row>
                <Row>
                  <Slot $w={22}><IndentIcon out /></Slot>
                  <Slot $w={22}><IndentIcon /></Slot>
                  <Divider $m={4} />
                  <OrientIcon />
                  <Caret />
                </Row>
              </Stack>
            </GroupBody>
            <GroupLabel $launcher>Uitlijning<LauncherIcon /></GroupLabel>
          </Group>

          <Group $w={87}>
            <GroupBody $pl={5}>
              <Stack>
                <Row><Combo $w={78}>Standaard<Caret /></Combo></Row>
                <Row>
                  <Slot $w={22}><CurrencyIcon /></Slot>
                  <Caret $ml={2} />
                  <GlyphSlot $w={24} $ml={3} $s={15}>%</GlyphSlot>
                  <GlyphSlot $w={18} $s={9.5}>000</GlyphSlot>
                </Row>
                <Row>
                  <DecimalStack>
                    <DecimalLine><DecArrow left />,0</DecimalLine>
                    <DecimalLine>,00</DecimalLine>
                  </DecimalStack>
                  <DecimalStack>
                    <DecimalLine>,00</DecimalLine>
                    <DecimalLine><DecArrow />,0</DecimalLine>
                  </DecimalStack>
                </Row>
              </Stack>
            </GroupBody>
            <GroupLabel $launcher>Getal<LauncherIcon /></GroupLabel>
          </Group>

          <Group $w={177}>
            <GroupBody $pl={7}>
              <Stack>
                <StyleItem><StyleIcon kind="cond" />Voorwaardelijke opmaak<Caret /></StyleItem>
                <StyleItem><StyleIcon kind="table" />Opmaken als tabel<Caret /></StyleItem>
                <StyleItem><StyleIcon kind="cell" />Celstijlen<Caret /></StyleItem>
              </Stack>
            </GroupBody>
            <GroupLabel>Stijlen</GroupLabel>
          </Group>

          <Group $w={113}>
            <GroupBody $pl={5}>
              <Stack>
                <StyleItem $gap={1}><Slot $w={20}><CellsIcon kind="ins" /></Slot>Invoegen<Caret $ml={9} /></StyleItem>
                <StyleItem $gap={1}><Slot $w={20}><CellsIcon kind="del" /></Slot>Verwijderen<Caret $ml={9} /></StyleItem>
                <StyleItem $gap={1}><Slot $w={20}><CellsIcon kind="fmt" /></Slot>Opmaak<Caret $ml={2} /></StyleItem>
              </Stack>
            </GroupBody>
            <GroupLabel>Cellen</GroupLabel>
          </Group>

          <Group $w={77}>
            <GroupBody $pl={6}>
              <Stack>
                <Row>
                  <Slot $w={18}><SumIcon /></Slot>
                  <Caret $ml={4} />
                  <SortSlot>
                    <SortLetters><span>A</span><span>Z</span></SortLetters>
                    <Svg w={7} h={6}><path d="M0 0h7L4.500 3v3h-2V3z" fill="#aaa" /></Svg>
                  </SortSlot>
                  <Caret $c="#ccc" $ml={5} />
                </Row>
                <Row>
                  <Slot $w={18}><FillDown /></Slot>
                  <Caret $ml={4} />
                  <Slot $w={16} $ml={6}><SearchIcon s={14} /></Slot>
                  <Caret $ml={5} />
                </Row>
                <Row>
                  <Slot $w={18}><Eraser /></Slot>
                  <Caret $ml={4} />
                </Row>
              </Stack>
            </GroupBody>
            <GroupLabel>Bewerken</GroupLabel>
          </Group>

          <CollapseSlot>
            <Svg w={9} h={6}><path d="M1 5l3.500-3.500L8 5" stroke="#666" strokeWidth="1.600" /></Svg>
          </CollapseSlot>
        </Ribbon>

        <FormulaBar>
          <NameBox>A3<Caret $s={4} $c="#777" /></NameBox>
          <Grip $ml={14} $mr={15} />
          <FormulaButtons>
            <Slot $w={22}>
              <Svg w={11} h={11}><path d="M1 1l9 9M10 1l-9 9" stroke="#c4c4c4" strokeWidth="1.600" /></Svg>
            </Slot>
            <Slot $w={50}>
              <Svg w={13} h={11}><path d="M1 6l4 4 7-9" stroke="#c4c4c4" strokeWidth="1.800" /></Svg>
            </Slot>
            <FxGlyph>fx</FxGlyph>
          </FormulaButtons>
          <FormulaInput>
            Aantal van Dossiernummer
            <Svg w={9} h={6}><path d="M1 1l3.500 3.500L8 1" stroke="#666" strokeWidth="1.300" /></Svg>
          </FormulaInput>
        </FormulaBar>

        <Work>
          <SheetColumn>
            <SheetArea>
              <Sheet />
              <VScroll>
                <ArrowBtn><TriUp /></ArrowBtn>
                <ScrollThumb $h={353} />
                <VTrack $dark />
                <ArrowBtn><TriDown /></ArrowBtn>
              </VScroll>
            </SheetArea>
            <SheetTabs>
              <Slot $w={20} $ml={17}><TriLeft c={green} /></Slot>
              <Slot $w={20} $ml={8}><TriRight c={green} /></Slot>
              <NavDots $ml={11}>...</NavDots>
              <TabSep $ml={6} />
              <SheetTab $w={82}>Functies4</SheetTab>
              <SheetTab $w={82}>Functies5</SheetTab>
              <SheetTab $w={34} $pl={14} $noSep>Fu</SheetTab>
              <NavDots>...</NavDots>
              <Slot $w={34} $ml={1}>
                <Svg w={17} h={17}>
                  <circle cx="8.500" cy="8.500" r="7.500" stroke="#888" />
                  <path d="M8.500 4.500v8M4.500 8.500h8" stroke="#777" strokeWidth="1.400" />
                </Svg>
              </Slot>
              <Grip $ml={12} />
              <HScroll>
                <ArrowBtn><TriLeft /></ArrowBtn>
                <HThumb />
                <HTrack />
                <ArrowBtn><TriRight /></ArrowBtn>
              </HScroll>
            </SheetTabs>
          </SheetColumn>

          <Pane>
            <PaneHead>
              <PaneTitle>Draaitabelvelden</PaneTitle>
              <PaneTools>
                <Caret $s={4} $c="#777" />
                <Svg w={10} h={10}><path d="M1 1l8 8M9 1L1 9" stroke="#666" strokeWidth="1.800" /></Svg>
              </PaneTools>
            </PaneHead>
            <PaneIntro>
              <div>Velden kiezen om toe te voegen<br />aan rapport:</div>
              <GearButton>
                <Svg w={13} h={13}>
                  <circle cx="6.500" cy="6.500" r="3.500" stroke="#999" strokeWidth="2.400" />
                  <path d="M6.500 0v2.500M6.500 10.500V13M0 6.500h2.500M10.500 6.500H13M2 2l1.500 1.500M9.500 9.500L11 11M11 2L9.500 3.500M3.500 9.500L2 11" stroke="#999" strokeWidth="1.600" />
                </Svg>
                <Caret $s={3} $c="#777" />
              </GearButton>
            </PaneIntro>
            <SearchBox>Zoeken<SearchIcon s={14} /></SearchBox>
            <FieldList>
              <Fields>
                {fieldList.map(([name, on]) => (
                  <FieldRow key={name} $on={on}>
                    <CheckBox>{on && <Tick />}</CheckBox>
                    {name}
                  </FieldRow>
                ))}
              </Fields>
              <ListScroll>
                <ArrowBtn><TriUp /></ArrowBtn>
                <ScrollThumb $h={22} />
                <VTrack />
                <ArrowBtn><TriDown /></ArrowBtn>
              </ListScroll>
            </FieldList>
            <DottedRule />
            <DragHint>Velden slepen tussen onderstaande<br />gebieden:</DragHint>
            <AreaBox>
              <Area>
                <AreaHead>
                  <Svg w={12} h={11}><path d="M0 0h11L7 5v6H4V5z" fill="#888" /></Svg>
                  Filters
                </AreaHead>
                <DropZone />
              </Area>
              <Area $right>
                <AreaHead>
                  <Svg w={12} h={10}><path d="M1 0v10M4 0v10M7 0v10M10 0v10" stroke="#888" strokeWidth="1.300" /></Svg>
                  Kolommen
                </AreaHead>
                <DropZone><Pill label="Herkomst" /></DropZone>
              </Area>
              <Area $bottom>
                <AreaHead>
                  <Svg w={12} h={8}><path d="M1 .500h10M1 2.500h10M1 4.500h10M1 6.500h10" stroke="#888" /></Svg>
                  Rijen
                </AreaHead>
                <DropZone><Pill label="Geslacht" /></DropZone>
              </Area>
              <Area $right $bottom>
                <AreaHead>
                  <Svg w={12} h={10}><path d="M10 1H1l5 4-5 4h9" stroke="#888" strokeWidth="1.100" /></Svg>
                  Waarden
                </AreaHead>
                <DropZone><Pill label="Aantal van Do..." /></DropZone>
              </Area>
            </AreaBox>
            <UpdateRow>
              <UpdateLabel><CheckBox />Bijwerken van indeling ui...</UpdateLabel>
              <UpdateButton>Bijwerken</UpdateButton>
            </UpdateRow>
          </Pane>
        </Work>

        <StatusBar>
          <StatusLeft>
            <StatusText>Gereed</StatusText>
            <Svg w={13} h={11}>
              <circle cx="3" cy="2.500" r="2.500" fill="#888" />
              <path d="M1 5h11v6H1zM4 5v6M8 5v6M1 8h11" stroke="#777" />
            </Svg>
          </StatusLeft>
          <ViewGroup>
            <NormalView>
              <Svg w={13} h={12}><path d="M.5.500h12v11H.5zM4.500.500v11M8.500.500v11M.5 4h12M.5 8h12" stroke="#666" /></Svg>
            </NormalView>
            <Slot $w={40}>
              <Svg w={13} h={12}><path d="M.5.500h12v11H.5zM3 3h7M3 5.500h7M3 8h7" stroke="#666" /></Svg>
            </Slot>
            <Slot $w={40}>
              <Svg w={13} h={12}><path d="M.5.500h12v11H.5zM6.500.500V7M.5 7h12" stroke="#666" /></Svg>
            </Slot>
            <ZoomSign>-</ZoomSign>
            <ZoomTrack />
            <ZoomSign>+</ZoomSign>
            <ZoomValue>100%</ZoomValue>
          </ViewGroup>
        </StatusBar>
      </Frame>

      <Annotation width="871" height="689" viewBox="0 0 871 689">
        <path d="M597 524L368 351" stroke="#e8473f" strokeWidth="6" />
        <path d="M352 338l31 3-15 21z" fill="#e8473f" />
      </Annotation>
    </Page>
  );
}
